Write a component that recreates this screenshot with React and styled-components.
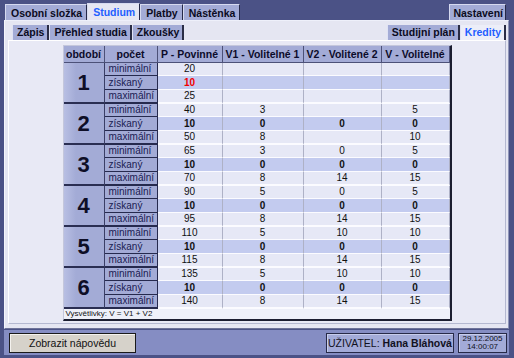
import React from 'react';
import styled, { createGlobalStyle } from 'styled-components';

const GlobalStyle = createGlobalStyle`
  html, body {
    margin: 0;
    padding: 0;
  }
  body {
    font-family: "Liberation Sans", Arial, sans-serif;
    background: #4b5286;
  }
`;

const Screen = styled.div`
  width: 514px;
  height: 358px;
  box-sizing: border-box;
  background: #4b5286;
  padding: 0 5px 3px 4px;
  display: flex;
  flex-direction: column;
`;

const TopBar = styled.div`
  height: 20px;
  flex-shrink: 0;
  display: flex;
  align-items: flex-end;
  justify-content: space-between;
  padding: 0 3px 0 1px;
`;

const TabGroup = styled.div`
  display: flex;
  align-items: flex-end;
`;

const MainTab = styled.div`
  line-height: 16px;
  box-sizing: border-box;
  padding: 0 ${p => (p.tight ? '2px' : '4px')} 0 ${p => (p.tight ? '3px' : '5px')};
  font-size: 10.5px;
  font-weight: bold;
  color: ${p => (p.active ? '#1f5fff' : '#0b0b22')};
  background: ${p => (p.active ? '#e5e6f2' : '#a3abd6')};
  border-top: 1px solid #d6daf0;
  border-left: 1px solid #d6daf0;
  border-right: 1px solid #252948;
  height: ${p => (p.active ? '17px' : '16px')};
`;

const Panel = styled.div`
  flex: 1;
  display: flex;
  flex-direction: column;
  background: #e5e6f2;
  border-top: 1px solid #eef0fa;
  border-left: 1px solid #f4f5fb;
  border-right: 1px solid #8f95b8;
  border-bottom: 1px solid #6d7298;
`;

const SubBar = styled.div`
  height: 19px;
  flex-shrink: 0;
  display: flex;
  align-items: flex-end;
  justify-content: space-between;
  padding: 0 2px 0 7px;
`;

const SubTab = styled.div`
  height: 15px;
  line-height: 15px;
  box-sizing: border-box;
  padding: 0 3px 0 4px;
  font-size: 10.5px;
  font-weight: bold;
  color: ${p => (p.active ? '#1f5fff' : '#0b0b22')};
  background: ${p => (p.active ? '#eceef8' : '#a3abd6')};
  border-left: 1px solid #dfe2f4;
  border-right: 2px solid #2a2d45;
`;

const Inner = styled.div`
  flex: 1;
  margin: 0 2px 4px 3px;
  background: #e8e9f5;
  border-top: 1px solid #ffffff;
  border-left: 1px solid #ffffff;
  border-right: 1px solid #b4b8d0;
  border-bottom: 1px solid #b4b8d0;
  display: flex;
  flex-direction: column;
  align-items: center;
  padding-top: 4px;
`;

const TableBox = styled.div`
  border-top: 1px solid #c4c7dc;
  border-left: 1px solid #c4c7dc;
  border-right: 2px solid #1b1d30;
  border-bottom: 2px solid #1b1d30;
  background: #eef0f9;
`;

const Grid = styled.table`
  border-collapse: separate;
  border-spacing: 0;
  table-layout: fixed;
  width: 386px;
  font-size: 10px;
`;

const HeadCell = styled.th`
  height: 16px;
  padding: 0;
  background: #a3abd6;
  border-right: 1px solid #4c5178;
  border-bottom: 1px solid #4c5178;
  font-size: 10.5px;
  font-weight: bold;
  color: #0c0c2a;
  text-align: center;
`;

const PeriodCell = styled.td`
  padding: 0;
  background: linear-gradient(90deg, #b8bfe3 0%, #a3abd6 30%);
  border-right: 1px solid #3a3e66;
  border-bottom: 2px solid #2a2e52;
  font-size: 22px;
  font-weight: bold;
  color: #0e0e26;
  text-align: center;
  vertical-align: middle;
`;

const LabelCell = styled.td`
  height: ${p => (p.earned ? '13px' : '12px')};
  line-height: 12px;
  padding: 0 0 0 4px;
  background: #a3abd6;
  border-right: 1px solid #262a4e;
  border-bottom: ${p => (p.last ? '2px' : '1px')} solid #262a4e;
  color: #1a1b52;
  text-align: left;
  white-space: nowrap;
  overflow: hidden;
`;

const DataCell = styled.td`
  line-height: 12px;
  padding: 0;
  background: ${p => (p.earned ? '#c3cbef' : '#e6e8f6')};
  border-right: 1px solid #aeb1c6;
  border-bottom: ${p => (p.last ? '2px' : '1px')} solid #fbfbff;
  color: ${p => (p.warn ? '#f00000' : '#111111')};
  font-weight: ${p => (p.earned ? 'bold' : 'normal')};
  text-align: center;
`;

const Legend = styled.div`
  height: 10px;
  line-height: 10px;
  padding-left: 2px;
  font-size: 8px;
  color: #111111;
`;

const BottomBar = styled.div`
  height: 25px;
  flex-shrink: 0;
  margin-top: 1px;
  background: #858dc3;
  display: flex;
  align-items: center;
  padding: 0 2px 0 5px;
`;

const HelpButton = styled.div`
  width: 127px;
  height: 20px;
  line-height: 18px;
  box-sizing: border-box;
  background: #d6d2ca;
  border: 1px solid #1a1a1a;
  box-shadow: inset 1px 1px 0 #f4f2ee;
  font-size: 10.5px;
  color: #111111;
  text-align: center;
`;

const Spacer = styled.div`
  flex: 1;
`;

const UserBox = styled.div`
  width: 128px;
  height: 20px;
  line-height: 18px;
  box-sizing: border-box;
  background: #a3abd8;
  border: 1px solid #272a48;
  box-shadow: inset 1px 1px 0 #c8cdec;
  font-size: 10.5px;
  color: #111122;
  text-align: center;
  white-space: nowrap;

  b {
    font-weight: bold;
  }
`;

const DateBox = styled.div`
  width: 49px;
  height: 20px;
  margin-left: 4px;
  box-sizing: border-box;
  padding-top: 1px;
  background: #a3abd8;
  border: 1px solid #272a48;
  box-shadow: inset 1px 1px 0 #c8cdec;
  font-size: 8px;
  line-height: 8px;
  color: #111122;
  text-align: center;
`;

const rowNames = [
  { key: 'min', label: 'minimální' },
  { key: 'got', label: 'získaný' },
  { key: 'max', label: 'maximální' },
];

const periods = [
  { id: 1, min: ['20', '', '', ''], got: ['10', '', '', ''], max: ['25', '', '', ''], warn: true },
  { id: 2, min: ['40', '3', '', '5'], got: ['10', '0', '0', '0'], max: ['50', '8', '', '10'] },
  { id: 3, min: ['65', '3', '0', '5'], got: ['10', '0', '0', '0'], max: ['70', '8', '14', '15'] },
  { id: 4, min: ['90', '5', '0', '5'], got: ['10', '0', '0', '0'], max: ['95', '8', '14', '15'] },
  { id: 5, min: ['110', '5', '10', '10'], got: ['10', '0', '0', '0'], max: ['115', '8', '14', '15'] },
  { id: 6, min: ['135', '5', '10', '10'], got: ['10', '0', '0', '0'], max: ['140', '8', '14', '15'] },
];

const headers = ['období', 'počet', 'P - Povinné', 'V1 - Volitelné 1', 'V2 - Volitené 2', 'V - Volitelné'];
const widths = [41, 53, 65, 81, 78, 68];

const App = () => {
  return (
    <Screen>
      <GlobalStyle />
      <TopBar>
        <TabGroup>
          <MainTab>Osobní složka</MainTab>
          <MainTab active>Studium</MainTab>
          <MainTab>Platby</MainTab>
          <MainTab>Nástěnka</MainTab>
        </TabGroup>
        <MainTab tight>Nastavení</MainTab>
      </TopBar>
      <Panel>
        <SubBar>
          <TabGroup>
            <SubTab>Zápis</SubTab>
            <SubTab>Přehled studia</SubTab>
            <SubTab>Zkoušky</SubTab>
          </TabGroup>
          <TabGroup>
            <SubTab>Studijní plán</SubTab>
            <SubTab active>Kredity</SubTab>
          </TabGroup>
        </SubBar>
        <Inner>
          <TableBox>
            <Grid>
              <colgroup>
                {widths.map((w, i) => (
                  <col key={i} style={{ width: w }} />
                ))}
              </colgroup>
              <thead>
                <tr>
                  {headers.map(h => (
                    <HeadCell key={h}>{h}</HeadCell>
                  ))}
                </tr>
              </thead>
              <tbody>
                {periods.map(p =>
                  rowNames.map((r, ri) => {
                    const last = ri === 2;
                    const earned = r.key === 'got';
                    return (
                      <tr key={p.id + r.key}>
                        {ri === 0 && <PeriodCell rowSpan={3}>{p.id}</PeriodCell>}
                        <LabelCell last={last} earned={earned}>{r.label}</LabelCell>
                        {p[r.key].map((v, ci) => (
                          <DataCell
                            key={ci}
                            last={last}
                            earned={earned}
                            warn={p.warn && earned && ci === 0}
                          >
                            {v}
                          </DataCell>
                        ))}
                      </tr>
                    );
                  })
                )}
              </tbody>
            </Grid>
            <Legend>Vysvětlivky: V = V1 + V2</Legend>
          </TableBox>
        </Inner>
      </Panel>
      <BottomBar>
        <HelpButton>Zobrazit nápovědu</HelpButton>
        <Spacer />
        <UserBox>
          UŽIVATEL: <b>Hana Bláhová</b>
        </UserBox>
        <DateBox>
          29.12.2005
          <br />
          14:00:07
        </DateBox>
      </BottomBar>
    </Screen>
  );
};

export default App;
